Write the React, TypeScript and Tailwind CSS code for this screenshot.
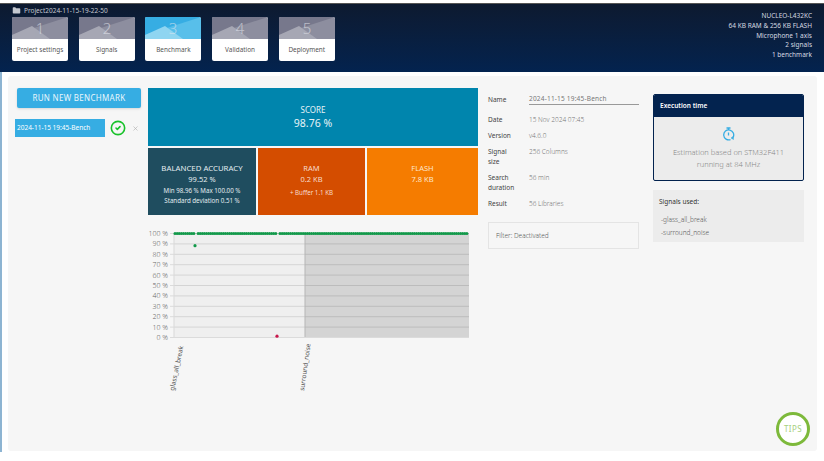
import { CircleCheck, FolderClosed, X } from "lucide-react";

const steps = [
  { n: 1, label: "Project settings" },
  { n: 2, label: "Signals" },
  { n: 3, label: "Benchmark", active: true },
  { n: 4, label: "Validation" },
  { n: 5, label: "Deployment" },
];

const info = [
  { k: "Date", v: "15 Nov 2024 07:45" },
  { k: "Version", v: "v4.6.0" },
  { k: "Signal size", v: "256 Columns" },
  { k: "Search duration", v: "56 min" },
  { k: "Result", v: "56 Libraries" },
];

function StepArt({ n, active }: { n: number; active?: boolean }) {
  const c = active ? ["#58bfea", "#36ade3", "#8fd5f1"] : ["#8d8e9f", "#77788c", "#a6a7b4"];
  return (
    <svg viewBox="0 0 56 22" className="block w-full h-[22px]">
      <rect width="56" height="22" fill={c[0]} />
      <polygon points="0,0 56,0 0,18" fill={c[1]} />
      <polygon points="0,18 20,9 38,22 0,22" fill={c[2]} />
      <text x="28" y="17" textAnchor="middle" fontSize="15" fontWeight="300" fill="#e6e7ee" opacity="0.6">
        {n}
      </text>
    </svg>
  );
}

function StopwatchIcon() {
  return (
    <svg width="13" height="14" viewBox="0 0 13 14" fill="none" stroke="#36ade3" strokeWidth="1.3" className="mb-[5px] mt-[1px]">
      <path d="M4.5 1h4" />
      <path d="M6.5 1v2" />
      <path d="M11 10.5A5 5 0 1 0 8.5 12.6" />
      <path d="M6.5 5.5v3" />
      <path d="M9 11l2.5 1.5-.2-3z" fill="#36ade3" strokeWidth="0.5" />
    </svg>
  );
}

function Chart() {
  const ys = Array.from({ length: 11 }, (_, i) => 233.5 + i * 10.4);
  const dots: number[] = [];
  for (let x = 175; x <= 468; x += 2.1) {
    if ((x > 194 && x < 197) || (x > 276 && x < 278.5)) continue;
    dots.push(x);
  }
  return (
    <svg width="330" height="185" viewBox="148 215 330 185" className="block">
      <rect x="174" y="233" width="131" height="104" fill="#efefef" />
      <rect x="305" y="233" width="164" height="104" fill="#d4d4d4" />
      {ys.map((y, i) => (
        <g key={i}>
          <line x1="170" x2="469" y1={y} y2={y} stroke="#000" strokeOpacity="0.11" strokeWidth="1" />
          <text x="168" y={y + 2.5} textAnchor="end" fontSize="7" fontWeight="300" fill="#666">
            {100 - i * 10} %
          </text>
        </g>
      ))}
      <line x1="174" x2="174" y1="233" y2="337" stroke="#d9d9d9" />
      <line x1="305" x2="305" y1="233" y2="337" stroke="#b5b5b5" />
      {dots.map((x) => (
        <circle key={x} cx={x} cy="233.5" r="1.5" fill="#12994a" />
      ))}
      <circle cx="195" cy="245.7" r="1.6" fill="#12994a" />
      <circle cx="277" cy="336.2" r="1.6" fill="#c8174c" />
      <text transform="translate(174 391) rotate(-78)" fontSize="6.5" fill="#555">
        glass_all_break
      </text>
      <text transform="translate(304 391) rotate(-82)" fontSize="6.5" fill="#555">
        surround_noise
      </text>
    </svg>
  );
}

export default function App() {
  return (
    <div className="relative h-[461px] w-[824px] overflow-hidden bg-white pt-[3px] font-['Noto_Sans',sans-serif] text-[7px]">
      {/* header */}
      <div className="flex h-[69px] justify-between border-t border-[#555] bg-gradient-to-b from-[#0d1a30] to-[#03234f] pl-3 pr-3">
        <div>
          <div className="flex h-[13px] items-center gap-[3px] text-[6.5px] text-[#c4c8d0]">
            <FolderClosed size={9} fill="#c4c8d0" strokeWidth={0} />
            Project2024-11-15-19-22-50
          </div>
          <div className="flex gap-[10.7px]">
            {steps.map((s) => (
              <div key={s.n} className="h-[44px] w-[56px] overflow-hidden rounded-[2px] bg-white">
                <StepArt n={s.n} active={s.active} />
                <div className="flex h-[22px] items-center justify-center text-[6.4px] text-[#555]">{s.label}</div>
              </div>
            ))}
          </div>
        </div>
        <div className="pt-[7px] text-right text-[6.5px] leading-[9.8px] text-[#d5d9e0]">
          <p>NUCLEO-L432KC</p>
          <p>64 KB RAM &amp; 256 KB FLASH</p>
          <p>Microphone 1 axis</p>
          <p>2 signals</p>
          <p>1 benchmark</p>
        </div>
      </div>

      {/* page body, with the thin blue edge on its left */}
      <div className="h-[380px] border-l-2 border-[#8db4d2] pl-[6px] pr-[7px] pt-[4px]">
        <div className="flex h-[375px] gap-[7px] rounded-[3px] bg-[#f6f6f6] pl-[9px] pt-[12px]">
          <div className="w-[124px]">
            <button className="h-[20px] w-full rounded-[2px] bg-[#36ade3] text-[8px] tracking-[0.3px] text-[#e8f6fc] shadow-sm">
              RUN NEW BENCHMARK
            </button>
            <div className="mt-[11px] -ml-[2px] flex items-center">
              <div className="flex h-[18px] w-[90px] items-center bg-[#36ade3] pl-[2px] text-[6.5px] text-white">
                2024-11-15 19:45-Bench
              </div>
              <CircleCheck size={16} className="ml-[5px] text-[#18c22a]" strokeWidth={2.4} />
              <X size={7} className="ml-[6px] text-[#aaa]" strokeWidth={2} />
            </div>
          </div>

          <div className="w-[330px]">
            <div className="h-[58px] bg-[#0085ad] pt-[16px] text-center text-[#e6f3f7]">
              <p className="text-[8px] leading-[11px]">SCORE</p>
              <p className="text-[10.5px] leading-[17px]">98.76 %</p>
            </div>
            <div className="mt-[2px] flex h-[67px] gap-[2px] text-center">
              <div className="w-[108px] bg-[#1f4d5f] pt-[15px] text-[#e3ecef]">
                <p className="text-[7.8px] leading-[11px]">BALANCED ACCURACY</p>
                <p className="text-[7.5px] leading-[11px]">99.52 %</p>
                <p className="mt-[1px] text-[6.2px] leading-[10px]">Min 98.96 % Max 100.00 %</p>
                <p className="text-[6.2px] leading-[10px]">Standard deviation 0.51 %</p>
              </div>
              <div className="w-[107px] bg-[#d44d00] pt-[15px] text-[#f7dccb]">
                <p className="text-[7.5px] leading-[11px]">RAM</p>
                <p className="text-[7.5px] leading-[11px]">0.2 KB</p>
                <p className="mt-[3px] text-[6.2px] leading-[10px]">+ Buffer 1.1 KB</p>
              </div>
              <div className="w-[111px] bg-[#f57c00] pt-[15px] text-[#fde6cc]">
                <p className="text-[7.5px] leading-[11px]">FLASH</p>
                <p className="text-[7.5px] leading-[11px]">7.8 KB</p>
              </div>
            </div>
            <Chart />
          </div>

          <div className="ml-[3px] w-[151px] text-[6.5px]">
            <div className="flex h-[17px] pt-[6px]">
              <span className="w-[41px] pt-[1px] text-[#444]">Name</span>
              <span className="flex-1 border-b border-[#999] tracking-[0.2px] text-[#777]">
                2024-11-15 19:45-Bench
              </span>
            </div>
            <div className="mt-[10px] flex flex-col gap-[6px]">
              {info.map((r) => (
                <div key={r.k} className="flex leading-[10px]">
                  <span className="w-[41px] pr-[12px] text-[#444]">{r.k}</span>
                  <span className="flex-1 font-light text-[#777]">{r.v}</span>
                </div>
              ))}
            </div>
            <div className="mt-[13px] flex h-[27px] items-center border border-[#e4e4e4] pl-[7px] font-light text-[#555]">
              Filter: Deactivated
            </div>
          </div>

          <div className="ml-[7px] w-[151px] pt-[6px]">
            <div className="h-[87px] overflow-hidden rounded-[2px] border border-[#03234f] bg-[#ececec]">
              <div className="flex h-[22px] items-center bg-[#03234f] pl-[6px] text-[6.5px] font-semibold text-white">
                Execution time
              </div>
              <div className="flex flex-col items-center pt-[9px] text-[7.5px] font-light leading-[12px] text-[#888]">
                <StopwatchIcon />
                <p>Estimation based on STM32F411</p>
                <p>running at 84 MHz</p>
              </div>
            </div>
            <div className="mt-[9px] h-[52px] bg-[#ececec] pl-[6px] pt-[6px] text-[6.5px]">
              <p className="leading-[12px] text-[#333]">Signals used:</p>
              <p className="mt-[5px] pl-[2px] font-light leading-[13px] text-[#555]">-glass_all_break</p>
              <p className="pl-[2px] font-light leading-[13px] text-[#555]">-surround_noise</p>
            </div>
          </div>
        </div>
      </div>

      {/* tips badge */}
      <div className="absolute left-[776px] top-[412px] flex h-[34px] w-[34px] items-center justify-center rounded-full border-[3.5px] border-[#7db93b] bg-white text-[8px] tracking-[0.4px] text-[#a6cf7c]">
        TIPS
      </div>
    </div>
  );
}
